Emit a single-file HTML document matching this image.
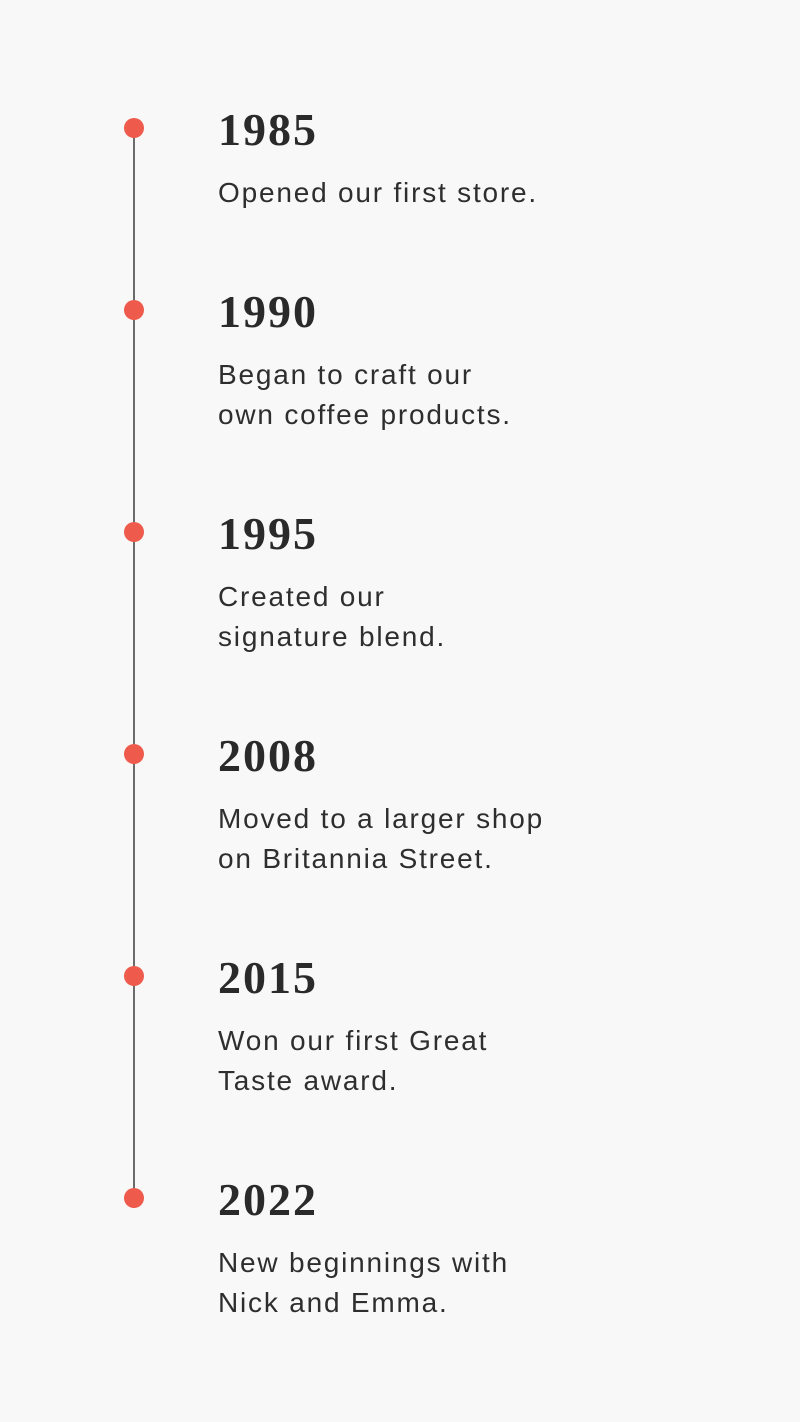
<!DOCTYPE html>
<html><head><meta charset="utf-8"><style>
html,body{margin:0;padding:0;}
body{width:800px;height:1422px;background:#f8f8f8;position:relative;overflow:hidden;}
.line{position:absolute;left:133px;top:128px;width:2px;height:1070px;background:#6b6b6b;}
.dot{position:absolute;left:124px;width:20px;height:20px;border-radius:50%;background:#ee5b4c;}
.blk{position:absolute;left:218px;}
.y{font-family:"Liberation Serif",serif;font-weight:bold;font-size:46px;letter-spacing:2px;color:#2a2a2a;line-height:50px;height:50px;}
.t{font-family:"Liberation Sans",sans-serif;font-size:28px;letter-spacing:1.8px;color:#2e2e2e;line-height:40px;margin-top:18px;}
</style></head><body>
<div class="line"></div>
<div class="dot" style="top:118px"></div>
<div class="dot" style="top:300px"></div>
<div class="dot" style="top:522px"></div>
<div class="dot" style="top:744px"></div>
<div class="dot" style="top:966px"></div>
<div class="dot" style="top:1188px"></div>
<div class="blk" style="top:105px"><div class="y">1985</div><div class="t">Opened our first store.</div></div>
<div class="blk" style="top:287px"><div class="y">1990</div><div class="t">Began to craft our<br>own coffee products.</div></div>
<div class="blk" style="top:509px"><div class="y">1995</div><div class="t">Created our<br>signature blend.</div></div>
<div class="blk" style="top:731px"><div class="y">2008</div><div class="t">Moved to a larger shop<br>on Britannia Street.</div></div>
<div class="blk" style="top:953px"><div class="y">2015</div><div class="t">Won our first Great<br>Taste award.</div></div>
<div class="blk" style="top:1175px"><div class="y">2022</div><div class="t">New beginnings with<br>Nick and Emma.</div></div>
</body></html>
